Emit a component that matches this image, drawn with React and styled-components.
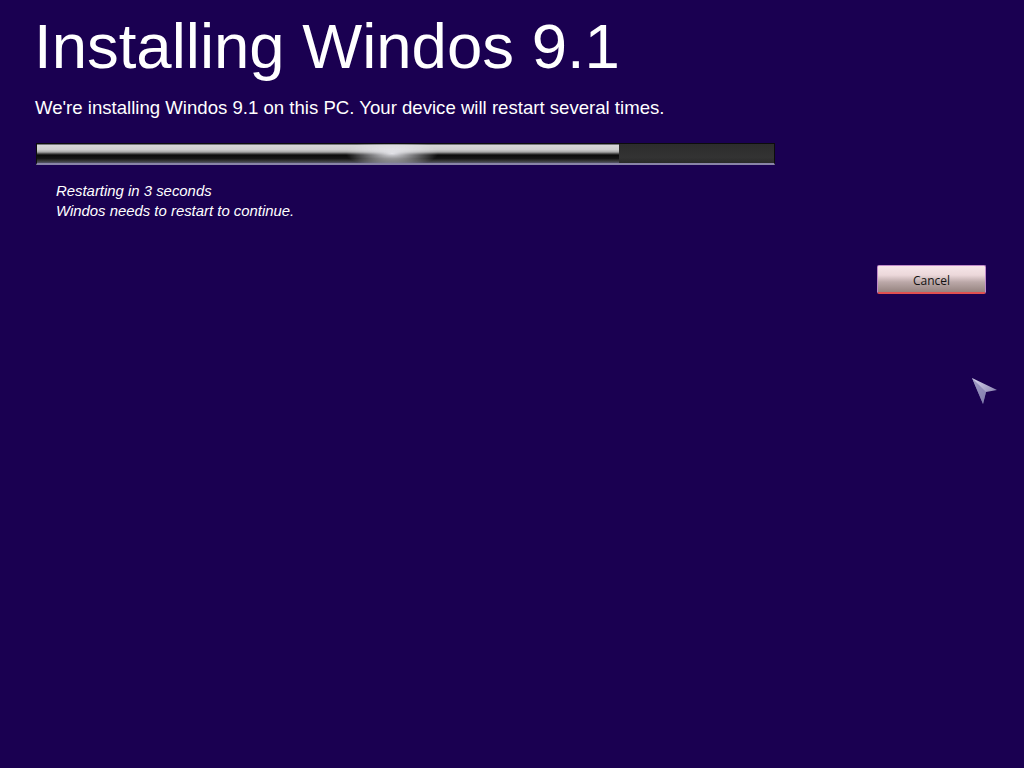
import React from "react";
import styled, { createGlobalStyle } from "styled-components";

const GlobalStyle = createGlobalStyle`
  html, body {
    margin: 0;
    padding: 0;
    background: #1a0051;
  }
  body {
    font-family: "Liberation Sans", Arial, sans-serif;
    color: #fff;
  }
`;

const Screen = styled.div`
  position: relative;
  width: 1024px;
  height: 768px;
  overflow: hidden;
  background: #1a0051;
  padding: 9px 0 0 34px;
  box-sizing: border-box;
`;

const Title = styled.h1`
  margin: 0;
  font-size: 63.5px;
  font-weight: normal;
  line-height: 74px;
`;

const Subtitle = styled.p`
  margin: 14px 0 0 1px;
  font-size: 18.6px;
  line-height: 22px;
`;

const Track = styled.div`
  margin: 24px 0 0 2px;
  width: 739px;
  height: 22px;
  box-sizing: border-box;
  background: linear-gradient(#2c2c2c, #333 70%, #2a2a2a);
  border: 1px solid #0c0c0c;
  border-bottom: 2px solid #8a84a8;
  display: flex;
  overflow: hidden;
`;

const Fill = styled.div`
  height: 100%;
  background:
    radial-gradient(ellipse 46px 14px at 61% 50%, rgba(235, 235, 240, 0.95), rgba(200, 200, 210, 0) 100%),
    linear-gradient(
      #2a2a35 0,
      #d8d8d8 6%,
      #cdcdcd 30%,
      #a8a8a8 42%,
      #555 50%,
      #0a0a0a 58%,
      #151515 76%,
      #3a3a3a 90%,
      #55556a 100%
    );
`;

const Status = styled.div`
  margin: 16px 0 0 22px;
  font-style: italic;
  font-size: 14.9px;
  line-height: 20px;
`;

const ButtonRow = styled.div`
  display: flex;
  justify-content: flex-end;
  margin: 44px 38px 0 0;
`;

const CancelButton = styled.button`
  width: 109px;
  height: 29px;
  box-sizing: border-box;
  border: 1px solid #c08ac8;
  border-bottom: 2px solid #e05050;
  border-radius: 2px;
  background: linear-gradient(#f6e6e8 0, #ecd8da 35%, #bba8a8 62%, #968480 100%);
  color: #111;
  font-family: "Open Sans", "DejaVu Sans", sans-serif;
  font-size: 12px;
  padding: 2px 0 0;
  cursor: pointer;
`;

const Cursor = styled.svg`
  position: absolute;
  left: 970px;
  top: 376px;
`;

export default function App() {
  const progress = 79;
  return (
    <Screen>
      <GlobalStyle />
      <Title>Installing Windos 9.1</Title>
      <Subtitle>
        We're installing Windos 9.1 on this PC. Your device will restart several times.
      </Subtitle>
      <Track>
        <Fill style={{ width: `${progress}%` }} />
      </Track>
      <Status>
        Restarting in 3 seconds
        <br />
        Windos needs to restart to continue.
      </Status>
      <ButtonRow>
        <CancelButton>Cancel</CancelButton>
      </ButtonRow>
      <Cursor width="30" height="30" viewBox="0 0 30 30">
        <defs>
          <linearGradient id="cg" x1="0" y1="0" x2="1" y2="1">
            <stop offset="0" stopColor="#dcd8f0" />
            <stop offset="0.6" stopColor="#9d97c0" />
            <stop offset="1" stopColor="#6a6494" />
          </linearGradient>
        </defs>
        <path d="M2 2 L27 14 L16 16 L13 28 Z" fill="url(#cg)" />
        <path d="M2 2 L16 16 L13 28 Z" fill="#7a74a8" opacity="0.6" />
      </Cursor>
    </Screen>
  );
}
